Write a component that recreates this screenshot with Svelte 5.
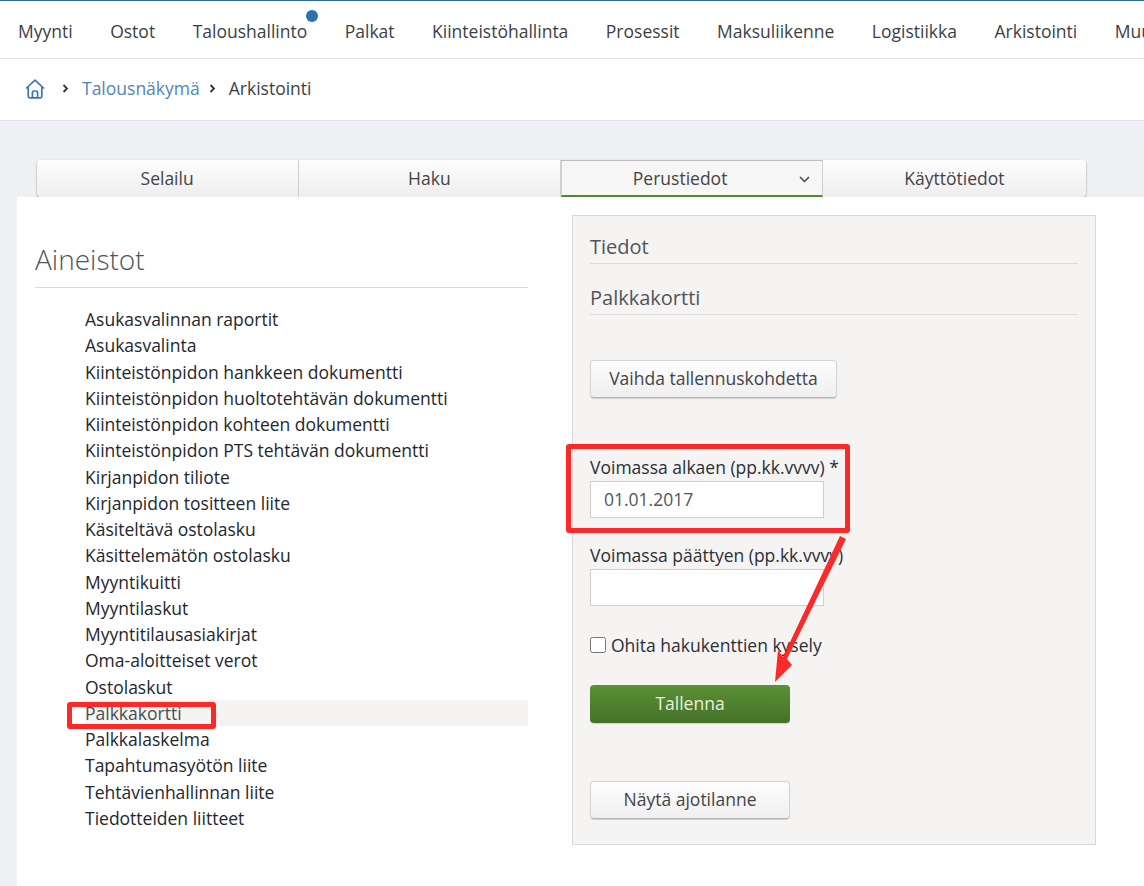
<script>
  const menu = ['Myynti', 'Ostot', 'Taloushallinto', 'Palkat', 'Kiinteistöhallinta', 'Prosessit', 'Maksuliikenne', 'Logistiikka', 'Arkistointi', 'Muut'];
  const tabs = ['Selailu', 'Haku', 'Perustiedot', 'Käyttötiedot'];
  const items = [
    'Asukasvalinnan raportit',
    'Asukasvalinta',
    'Kiinteistönpidon hankkeen dokumentti',
    'Kiinteistönpidon huoltotehtävän dokumentti',
    'Kiinteistönpidon kohteen dokumentti',
    'Kiinteistönpidon PTS tehtävän dokumentti',
    'Kirjanpidon tiliote',
    'Kirjanpidon tositteen liite',
    'Käsiteltävä ostolasku',
    'Käsittelemätön ostolasku',
    'Myyntikuitti',
    'Myyntilaskut',
    'Myyntitilausasiakirjat',
    'Oma-aloitteiset verot',
    'Ostolaskut',
    'Palkkakortti',
    'Palkkalaskelma',
    'Tapahtumasyötön liite',
    'Tehtävienhallinnan liite',
    'Tiedotteiden liitteet'
  ];
</script>

<div class="page">
  <nav class="menu">
    {#each menu as m}
      <span class="menu-item">{m}{#if m === 'Taloushallinto'}<i class="dot"></i>{/if}</span>
    {/each}
  </nav>

  <div class="crumbs">
    <svg class="home" width="22" height="22" viewBox="0 0 22 22" fill="none" stroke="#3a78b5" stroke-width="1.7" stroke-linejoin="round">
      <path d="M2 10.5 11 2.2l9 8.3" />
      <path d="M4.2 9v9.2a1.6 1.6 0 0 0 1.6 1.6h10.4a1.6 1.6 0 0 0 1.6-1.6V9" />
      <path d="M8.4 19.6v-5a1.6 1.6 0 0 1 1.6-1.6h2a1.6 1.6 0 0 1 1.6 1.6v5" />
    </svg>
    <svg class="sep first" width="7" height="9" viewBox="0 0 7 9" fill="none" stroke="#333" stroke-width="1.8"><path d="M1.5 1 5 4.5 1.5 8" /></svg>
    <span class="link">Talousnäkymä</span>
    <svg class="sep" width="7" height="9" viewBox="0 0 7 9" fill="none" stroke="#333" stroke-width="1.8"><path d="M1.5 1 5 4.5 1.5 8" /></svg>
    <span>Arkistointi</span>
  </div>

  <div class="tabs">
    {#each tabs as t}
      <div class="tab" class:active={t === 'Perustiedot'}>
        {t}
        {#if t === 'Perustiedot'}
          <svg class="chev" width="11" height="7" viewBox="0 0 11 7" fill="none" stroke="#444" stroke-width="1.5"><path d="M1 1l4.5 4.5L10 1" /></svg>
        {/if}
      </div>
    {/each}
  </div>

  <main class="content">
    <section class="left">
      <h1>Aineistot</h1>
      <ul>
        {#each items as it}
          <li class:sel={it === 'Palkkakortti'}>{it}</li>
        {/each}
      </ul>
    </section>

    <aside class="panel">
      <h2>Tiedot</h2>
      <h2 class="second">Palkkakortti</h2>
      <button class="btn change">Vaihda tallennuskohdetta</button>
      <label class="field first-field" for="from">Voimassa alkaen (pp.kk.vvvv) *</label>
      <input id="from" value="01.01.2017" />
      <label class="field second-field" for="to">Voimassa päättyen (pp.kk.vvvv)</label>
      <input id="to" class="to" />
      <label class="check"><input type="checkbox" /> Ohita hakukenttien kysely</label>
      <button class="btn save">Tallenna</button>
      <button class="btn status">Näytä ajotilanne</button>
    </aside>
  </main>

  <div class="mark mark-item"></div>
  <div class="mark mark-field"></div>
  <svg class="arrow" width="90" height="160" viewBox="0 0 90 160" fill="#fb2a2a">
    <path d="M70 6 76 9 17 129 22 135 5 152 8 120 13 127Z" />
  </svg>
</div>

<style>
  :global(body) {
    margin: 0;
    background: #eff0f4;
  }
  .page {
    position: relative;
    width: 1144px;
    height: 886px;
    overflow: hidden;
    font-family: 'Open Sans', sans-serif;
    font-size: 17.5px;
    color: #2b2f36;
    background: #eff0f4;
  }
  .menu {
    display: flex;
    gap: 37.5px;
    height: 59px;
    padding-left: 18px;
    align-items: center;
    box-sizing: border-box;
    background: #fff;
    border-top: 1px solid #2f6aa3;
    border-bottom: 1px solid #e4e4e4;
    white-space: nowrap;
    color: #3a3f47;
  }
  .menu-item {
    position: relative;
    top: 1px;
  }
  .dot {
    position: absolute;
    right: -11px;
    top: -9px;
    width: 12px;
    height: 12px;
    border-radius: 50%;
    background: #2f6fae;
  }
  .crumbs {
    display: flex;
    align-items: center;
    height: 62px;
    padding: 0 0 3px 24px;
    box-sizing: border-box;
    background: #fff;
    border-bottom: 1px solid #e3e4e8;
    color: #3a3f47;
  }
  .home {
    margin-top: 1px;
  }
  .sep {
    margin: 0 13px 0 9px;
  }
  .sep.first {
    margin: 0 13px 0 16px;
  }
  .link {
    color: #4f86b8;
  }
  .tabs {
    display: flex;
    margin: 39px 0 0 36.5px;
    width: 1049px;
    height: 37px;
    box-sizing: border-box;
    border-radius: 4px;
    box-shadow: 0 1px 2px rgba(0, 0, 0, 0.45);
  }
  .tab {
    position: relative;
    flex: 0 0 25%;
    display: flex;
    align-items: center;
    justify-content: center;
    box-sizing: border-box;
    padding-bottom: 2px;
    background: linear-gradient(#fdfdfd, #eeeeee);
    border-right: 1px solid #cfcfcf;
    color: #444;
  }
  .tab:first-child {
    border-radius: 4px 0 0 4px;
  }
  .tab:last-child {
    border-right: 0;
    border-radius: 0 4px 4px 0;
  }
  .tab.active {
    padding: 0 24px 0 0;
    background: #f6f6f6;
    border-top: 1px solid #bbb;
    border-left: 1px solid #cfcfcf;
    border-bottom: 2px solid #4f8a2b;
  }
  .chev {
    position: absolute;
    right: 12px;
    top: 15px;
  }
  .content {
    display: flex;
    align-items: flex-start;
    margin-left: 17px;
    height: 689px;
    background: #fff;
  }
  .left {
    width: 493px;
    margin: 0 44px 0 18px;
  }
  h1 {
    margin: 45px 0 0;
    padding-bottom: 11px;
    font-size: 28px;
    line-height: 34px;
    font-weight: 300;
    color: #50545a;
    border-bottom: 1px solid #d9d9d9;
  }
  ul {
    list-style: none;
    margin: 18px 0 0;
    padding: 0;
  }
  li {
    height: 26.26px;
    line-height: 26.26px;
    margin-left: 50px;
    color: #23272e;
  }
  li.sel {
    background: #f5f4f2;
    color: #4a4e55;
  }
  .panel {
    width: 524px;
    height: 630px;
    margin-top: 18px;
    padding: 0 17px;
    box-sizing: border-box;
    background: #f5f4f2;
    border: 1px solid #d8d8d8;
  }
  h2 {
    margin: 17px 0 0;
    padding-bottom: 1px;
    height: 29px;
    font-size: 20px;
    line-height: 27px;
    font-weight: 400;
    color: #50545a;
    border-bottom: 1px solid #dcdcdc;
  }
  h2.second {
    margin-top: 20px;
  }
  .btn {
    display: block;
    box-sizing: border-box;
    width: 200px;
    height: 38px;
    padding: 0 0 2px;
    font: inherit;
    color: #444;
    border: 1px solid #d4d4d4;
    border-bottom-color: #b5b5b5;
    border-radius: 4px;
    background: linear-gradient(#fdfdfd, #efefef);
    box-shadow: 0 1px 1px rgba(0, 0, 0, 0.15);
  }
  .change {
    width: 247px;
    margin-top: 45px;
  }
  .field {
    display: block;
    line-height: 22px;
    white-space: nowrap;
  }
  .first-field {
    margin-top: 58px;
  }
  .second-field {
    margin-top: 26px;
  }
  input:not([type]) {
    display: block;
    box-sizing: border-box;
    width: 234px;
    height: 37px;
    margin-top: 3px;
    padding: 0 13px 2px;
    font: inherit;
    color: #50545a;
    background: #fff;
    border: 1px solid #cfcfcf;
    outline: 0;
    border-radius: 0;
  }
  .check {
    display: flex;
    align-items: center;
    gap: 5px;
    margin-top: 28px;
    line-height: 22px;
    white-space: nowrap;
  }
  .check input {
    width: 16px;
    height: 16px;
    margin: 0;
  }
  .save {
    margin-top: 29px;
    color: #e8f1df;
    border: 0;
    background: linear-gradient(#5b9136, #467129);
  }
  .status {
    margin-top: 58px;
  }
  .mark {
    position: absolute;
    box-sizing: border-box;
    border: 5px solid #fb2a2a;
    border-radius: 3px;
  }
  .mark-item {
    left: 67px;
    top: 702px;
    width: 149px;
    height: 27px;
  }
  .mark-field {
    left: 566px;
    top: 444px;
    width: 284px;
    height: 89px;
  }
  .arrow {
    position: absolute;
    left: 770px;
    top: 530px;
  }
</style>
